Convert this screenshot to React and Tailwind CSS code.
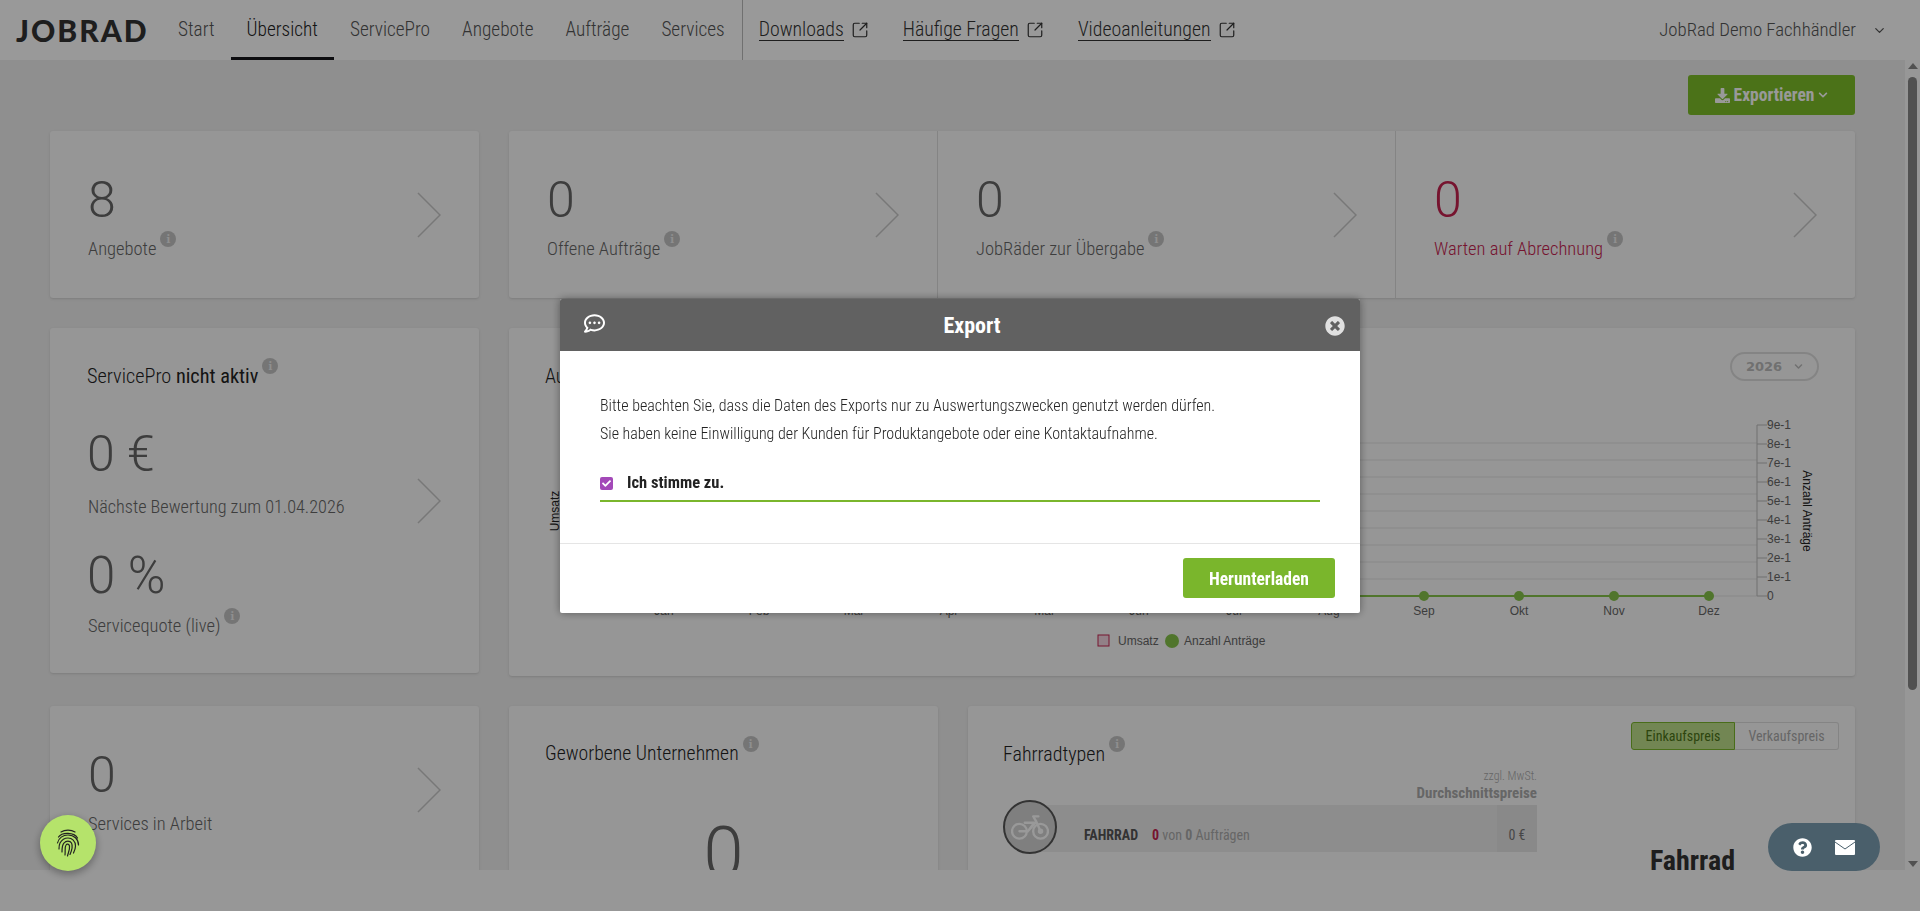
import React from "react";
import { SquareArrowOutUpRight, ChevronDown } from "lucide-react";
import { FaDownload, FaChevronDown, FaRegCommentDots, FaTimesCircle, FaQuestionCircle, FaCheck } from "react-icons/fa";

const navItems = ["Start", "Übersicht", "ServicePro", "Angebote", "Aufträge", "Services"];
const extLinks = ["Downloads", "Häufige Fragen", "Videoanleitungen"];
const months = ["Jan", "Feb", "Mär", "Apr", "Mai", "Jun", "Jul", "Aug", "Sep", "Okt", "Nov", "Dez"];
const yTicks = ["0", "1e-1", "2e-1", "3e-1", "4e-1", "5e-1", "6e-1", "7e-1", "8e-1", "9e-1"];

const Info = ({ className = "" }) => (
  <span className={"inline-flex h-4 w-4 shrink-0 items-center justify-center rounded-full bg-[#c4c4c4] text-[11px] font-bold leading-none text-[#eee] font-['DejaVu_Serif',serif] " + className}>
    i
  </span>
);

const Arrow = ({ className = "" }) => (
  <svg width="24" height="46" viewBox="0 0 24 46" fill="none" className={className}>
    <path d="M1 1l22 22L1 45" stroke="#c9c9c9" strokeWidth="1.5" />
  </svg>
);

const Stat = ({ value, label, red, info = true, className = "" }) => (
  <div className={"relative flex shrink-0 flex-col pl-[38px] " + className}>
    <div className={"mt-[39px] text-[50px] leading-[60px] [font-stretch:100%] " + (red ? "text-[#c5224f]" : "text-[#666]")}>{value}</div>
    <div className="mt-[7px] flex items-start">
      <span className={"text-[18.5px] leading-[24px] " + (red ? "text-[#c5224f]" : "text-[#666]")}>{label}</span>
      {info && <Info className="ml-1 -mt-[6px]" />}
    </div>
    <Arrow className="absolute right-[38px] top-[61px]" />
  </div>
);

export default function App() {
  return (
    <div className="relative flex h-[911px] flex-col overflow-hidden bg-[#fcfcfc] font-['Roboto',sans-serif] font-light [font-stretch:75%]">
      <header className="flex h-[60px] shrink-0 items-stretch bg-white text-[19.3px] text-[#555]">
        <div className="ml-4 mr-[16px] flex w-[130px] items-center text-[30px] font-black leading-none tracking-[2px] text-[#333] [font-stretch:100%] font-['Lato',sans-serif]">JOBRAD</div>
        {navItems.map((n) => (
          <a key={n} className={"flex items-center px-4 " + (n === "Übersicht" ? "border-b-[3px] border-[#16161c] pt-[3px] text-[#222]" : "")}>{n}</a>
        ))}
        <div className="ml-[1px] w-px bg-[#bbb]" />
        <div className="flex items-center gap-[34px] pl-[16px] text-[19.8px]">
          {extLinks.map((l) => (
            <span key={l} className="flex items-center gap-[7px] text-[#333]">
              <span className="border-b border-[#333] leading-[20px]">{l}</span>
              <SquareArrowOutUpRight size={18} strokeWidth={1.6} />
            </span>
          ))}
        </div>
        <div className="ml-auto mr-[33px] flex items-center gap-4 text-[18.8px] text-[#555]">
          JobRad Demo Fachhändler
          <ChevronDown size={15} />
        </div>
      </header>

      <div className="flex h-[810px] shrink-0 bg-[#eeeeee]">
        <main className="h-full flex-1 overflow-hidden px-[50px]">
          <div className="flex justify-end pt-[15px]">
            <button className="flex h-10 w-[167px] items-center justify-center gap-1 rounded-[3px] bg-[#7dbf28] text-[17.5px] font-bold text-white">
              <FaDownload size={15} /> Exportieren <FaChevronDown size={10} />
            </button>
          </div>

          <div className="mt-4 flex gap-[30px]">
            <div className="flex h-[167px] w-[429px] rounded-[3px] bg-[#fafafa] shadow-sm"><Stat value="8" label="Angebote" className="w-[429px]" /></div>
            <div className="flex h-[167px] flex-1 divide-x divide-[#ddd] rounded-[3px] bg-[#fafafa] shadow-sm">
              <Stat value="0" label="Offene Aufträge" className="w-[429px]" />
              <Stat value="0" label="JobRäder zur Übergabe" className="w-[458px]" />
              <Stat value="0" label="Warten auf Abrechnung" red className="w-[459px]" />
            </div>
          </div>

          <div className="mt-[30px] flex gap-[30px]">
            <div className="relative h-[345px] w-[429px] rounded-[3px] bg-[#fafafa] pl-[38px] pt-[36px] shadow-sm">
              <div className="-ml-[1px] flex items-start text-[20.3px] leading-6 text-[#222]">
                <span>ServicePro <b>nicht aktiv</b></span>
                <Info className="ml-1 -mt-[6px]" />
              </div>
              <div className="-ml-[1px] mt-[36px] text-[50px] leading-[60px] text-[#666] [font-stretch:100%]">0 €</div>
              <div className="mt-[11px] text-[18.2px] leading-6 text-[#666]">Nächste Bewertung zum 01.04.2026</div>
              <div className="-ml-[1px] mt-[27px] text-[51px] leading-[60px] text-[#666] [font-stretch:100%]">0 %</div>
              <div className="mt-[8px] flex items-start text-[18.5px] leading-6 text-[#666]">
                Servicequote (live)
                <Info className="ml-1 -mt-[6px]" />
              </div>
              <Arrow className="absolute right-[38px] top-[150px]" />
            </div>

            <div className="relative h-[348px] flex-1 rounded-[3px] bg-[#fafafa] shadow-sm">
              <div className="pl-[36px] pt-[36px] text-[20px] leading-6 text-[#222]">Aufträge</div>
              <div className="absolute right-[36px] top-[24px] flex h-[29px] w-[89px] items-center justify-center gap-3 rounded-full border-2 border-[#ddd] text-[13px] font-bold text-[#bbb] [font-stretch:100%] font-['DejaVu_Sans',sans-serif]">
                2026 <FaChevronDown size={9} />
              </div>
              <svg width="1346" height="348" className="absolute left-0 top-0 font-normal [font-stretch:100%] font-['Liberation_Sans',sans-serif]">
                {yTicks.map((t, i) => (
                  <g key={t}>
                    <line x1="86" x2="1248" y1={268 - i * 17} y2={268 - i * 17} stroke="#e4e4e4" />
                    <line x1="1248" x2="1258" y1={268 - i * 19} y2={268 - i * 19} stroke="#bbb" />
                    <text x="1258" y={272 - i * 19} fontSize="12" fill="#666">{t}</text>
                  </g>
                ))}
                <line x1="1248" x2="1248" y1="97" y2="268" stroke="#bbb" />
                <line x1="155" x2="1200" y1="268" y2="268" stroke="#85c34a" strokeWidth="2" />
                {months.map((m, i) => (
                  <g key={m}>
                    <circle cx={155 + i * 95} cy="268" r="5" fill="#85c34a" />
                    <text x={155 + i * 95} y="287" fontSize="12" fill="#666" textAnchor="middle">{m}</text>
                  </g>
                ))}
                <text transform="translate(50 183) rotate(-90)" fontSize="12" fill="#222" textAnchor="middle">Umsatz</text>
                <text transform="translate(1294 183) rotate(90)" fontSize="12" fill="#222" textAnchor="middle">Anzahl Anträge</text>
                <rect x="589" y="307" width="11" height="11" fill="#f3d6e2" stroke="#c5224f" />
                <text x="609" y="317" fontSize="12" fill="#666">Umsatz</text>
                <circle cx="663" cy="313" r="7" fill="#85c34a" />
                <text x="675" y="317" fontSize="12" fill="#666">Anzahl Anträge</text>
              </svg>
            </div>
          </div>

          <div className="mt-[30px] flex gap-[30px]">
            <div className="flex h-[300px] w-[429px] rounded-[3px] bg-[#fafafa] shadow-sm"><Stat value="0" label="Services in Arbeit" info={false} className="w-[429px]" /></div>
            <div className="h-[300px] w-[429px] rounded-[3px] bg-[#fafafa] pl-[36px] pt-[36px] shadow-sm">
              <div className="flex items-start text-[19.7px] leading-6 text-[#222]">Geworbene Unternehmen <Info className="ml-1 -mt-[6px]" /></div>
              <div className="-ml-[36px] mt-[48px] text-center text-[72px] leading-[80px] text-[#666] [font-stretch:100%]">0</div>
            </div>
            <div className="relative h-[300px] flex-1 rounded-[3px] bg-[#fafafa] pl-[35px] pt-[36px] shadow-sm">
              <div className="flex items-start text-[20px] leading-6 text-[#222]">Fahrradtypen <Info className="ml-1 -mt-[6px]" /></div>
              <div className="absolute right-[16px] top-[16px] flex h-[28px] text-[14px] font-normal">
                <span className="flex w-[104px] items-center justify-center rounded-l-[3px] border border-[#7ab62c] bg-[#bfe08a] text-[#4b7318]">Einkaufspreis</span>
                <span className="flex w-[104px] items-center justify-center rounded-r-[3px] border border-l-0 border-[#ddd] text-[#aaa]">Verkaufspreis</span>
              </div>
              <div className="w-[534px]">
                <div className="mt-[2px] text-right text-[12px] leading-4 text-[#aaa]">zzgl. MwSt.</div>
                <div className="text-right text-[15px] font-bold leading-[18px] text-[#aaa]">Durchschnittspreise</div>
                <div className="relative ml-[27px] mt-[3px] flex h-[47px] items-end bg-[#ececec] pl-[54px]">
                  <div className="absolute -left-[27px] -top-[5px] flex h-[54px] w-[54px] items-center justify-center rounded-full border-2 border-[#555] bg-[#d4d4d4]">
                    <svg width="38" height="28" viewBox="0 0 36 26" fill="none" stroke="#fff" strokeWidth="2.2" strokeLinecap="round" strokeLinejoin="round">
                      <circle cx="8" cy="17" r="7" />
                      <circle cx="28" cy="17" r="7" />
                      <circle cx="28" cy="17" r="1.5" fill="#fff" />
                      <path d="M8 17h8l8-9 4 9M13 9h9l-6 8M21 3l3 5M21 3h5" />
                    </svg>
                  </div>
                  <div className="flex flex-1 items-center gap-[14px] pb-[6px] text-[14px] font-normal">
                    <b className="text-[#555]">FAHRRAD</b>
                    <span className="text-[#aaa]"><b className="text-[#c5224f]">0</b> von <b>0</b> Aufträgen</span>
                  </div>
                  <div className="flex h-full w-10 items-center justify-center bg-[#e4e4e4] pt-[13px] text-[14px] font-normal text-[#777]">0 €</div>
                </div>
              </div>
              <div className="absolute left-[682px] top-[139px] text-[28px] font-bold leading-8 text-[#333]">Fahrrad</div>
            </div>
          </div>
        </main>
        <div className="relative w-[15px] shrink-0 bg-[#fcfcfc]">
          <div className="absolute left-0 top-[3px] h-0 w-0 translate-x-[3px] border-x-[5px] border-b-[6px] border-x-transparent border-b-[#888]" />
          <div className="absolute left-[3px] top-[17px] h-[613px] w-[9px] rounded-full bg-[#888]" />
          <div className="absolute bottom-[3px] left-0 h-0 w-0 translate-x-[3px] border-x-[5px] border-t-[6px] border-x-transparent border-t-[#888]" />
        </div>
      </div>
      <footer className="h-[41px] shrink-0 bg-[#fcfcfc]" />

      <div className="fixed inset-0 flex justify-center bg-black/40 pt-[299px]">
        <div className="h-[314px] w-[800px] overflow-hidden rounded-[2px] bg-white shadow-[0_0_8px_rgba(0,0,0,0.4)]">
          <div className="relative flex h-[52px] items-center justify-center bg-[#616161] pl-6 text-[22px] font-bold text-white">
            Export
            <FaRegCommentDots size={21} className="absolute left-[24px] top-[14px]" />
            <FaTimesCircle size={20} className="absolute right-[15px] top-[17px] text-[#e0e0e0]" />
          </div>
          <div className="h-[193px] border-b border-[#e5e5e5] px-10 pt-[41px] text-[16px] leading-[28px] text-[#222]">
            <p>Bitte beachten Sie, dass die Daten des Exports nur zu Auswertungszwecken genutzt werden dürfen.</p>
            <p>Sie haben keine Einwilligung der Kunden für Produktangebote oder eine Kontaktaufnahme.</p>
            <div className="mt-[21px] flex items-center gap-[14px] border-b-2 border-[#7ab62c] pb-[3px] text-[16.5px] font-bold text-[#222]">
              <span className="flex h-[13px] w-[13px] items-center justify-center rounded-[2px] bg-[#a349b8] text-white"><FaCheck size={9} /></span>
              Ich stimme zu.
            </div>
          </div>
          <div className="flex justify-end pr-[25px] pt-[14px]">
            <button className="h-10 w-[152px] rounded-[3px] bg-[#7ab62c] pt-[2px] text-[17.5px] font-bold text-white">Herunterladen</button>
          </div>
        </div>
      </div>

      <div className="fixed left-[40px] top-[815px] flex h-14 w-14 items-center justify-center rounded-full bg-[#b5e36b] shadow-[0_3px_8px_rgba(0,0,0,0.35)]">
        <svg width="24" height="28" viewBox="0 0 24 28" fill="none" stroke="#222" strokeWidth="1.2" strokeLinecap="round">
          <path d="M5 3C9 0.5 15 0.5 19 3" />
          <path d="M2.5 8C6 3 18 3 21.5 9" />
          <path d="M1.5 14C2.5 9 7 6 12 6C18 6 22.5 10 22.5 16" />
          <path d="M3 20C3 18 3 16 4 14C6 10.5 9 9 12 9C16 9 19.5 12 19.5 17C19.5 20 18.5 22 17.5 24" />
          <path d="M6 23C6 19 6 16 8 14C10 11.5 14 11.5 15.5 14C17 17 16 21 14 25.5" />
          <path d="M9 26C9.5 22 8.5 18 10 16C11 14.5 13 15 13.5 17C14 20 12.5 23 11.5 27" />
        </svg>
      </div>
      <div className="fixed left-[1768px] top-[823px] flex h-12 w-[112px] items-center justify-center gap-[23px] rounded-full bg-[#4a5f6b] text-white">
        <FaQuestionCircle size={19} />
        <svg width="20" height="15" viewBox="0 0 20 15">
          <rect width="20" height="15" rx="1" fill="#fff" />
          <path d="M0 2l10 7 10-7" fill="none" stroke="#4a5f6b" strokeWidth="1" />
        </svg>
      </div>
    </div>
  );
}
